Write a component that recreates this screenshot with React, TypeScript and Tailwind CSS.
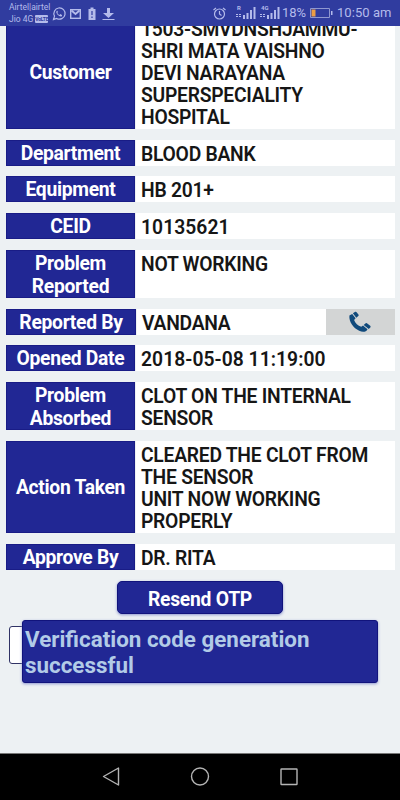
import React from "react";

type Row = { label: string; value: string[]; size: string; call?: boolean };

const rows: Row[] = [
  { label: "Customer", value: ["1503-SMVDNSHJAMMU-", "SHRI MATA VAISHNO", "DEVI NARAYANA", "SUPERSPECIALITY", "HOSPITAL"], size: "h-[114px] mb-[11px]" },
  { label: "Department", value: ["BLOOD BANK"], size: "h-[26px] mb-[10px]" },
  { label: "Equipment", value: ["HB 201+"], size: "h-[26px] mb-[11px]" },
  { label: "CEID", value: ["10135621"], size: "h-[26px] mb-[11px]" },
  { label: "Problem Reported", value: ["NOT WORKING"], size: "h-[48px] mb-[11px]" },
  { label: "Reported By", value: ["VANDANA"], size: "h-[26px] mb-[10px]", call: true },
  { label: "Opened Date", value: ["2018-05-08 11:19:00"], size: "h-[26px] mb-[11px]" },
  { label: "Problem Absorbed", value: ["CLOT ON THE INTERNAL", "SENSOR"], size: "h-[48px] mb-[11px]" },
  { label: "Action Taken", value: ["CLEARED THE CLOT FROM", "THE SENSOR", "UNIT NOW WORKING", "PROPERLY"], size: "h-[92px] mb-[11px]" },
  { label: "Approve By", value: ["DR. RITA"], size: "h-[26px] mb-[11px]" },
];

function Phone() {
  return (
    <svg className="mr-[1px] h-[22px] w-[24px]" viewBox="0 0 24 22" fill="#104a7c">
      <path d="M1.400 4.500 4.200 3 7.600 7.300 6.100 8.900c1.100 3.300 3.800 5.900 7.200 6.900l1.700-1.300 4.500 3.700c-1.300 2.800-4.700 3.400-8.300 1.600C5.500 17 .8 10.900 1.400 4.500Z" />
      <path d="m4.900 2.300 2.300-1.500q.8-.3 1.400.4l2 2.600q.3.700-.3 1.300L8.300 6.700zM15.700 13.900l2-1.700q.6-.3 1.200.1l3.300 2.500q.7.700.3 1.400l-1.700 1.700z" />
    </svg>
  );
}

function DetailRow({ row }: { row: Row }) {
  return (
    <div className={`flex shrink-0 ${row.size}`}>
      <div className={`flex shrink-0 items-center justify-center border border-[#191c86] bg-[#212794] px-4 pt-[3px] text-center tracking-[-0.3px] text-white ${row.call ? "w-[130px]" : "w-[129px]"}`}>
        <span className={row.label.includes("Problem") ? "w-[90px]" : "whitespace-nowrap"}>{row.label}</span>
      </div>
      <div className="ml-px flex-1 bg-white pt-[3.500px] pl-[5px] font-semibold whitespace-nowrap text-[#161616]">
        {row.value.map((line) => <div key={line} className={/^\d[\d:\s-]+$/.test(line) ? "tracking-[0.05px]" : "tracking-[-0.25px]"}>{line}</div>)}
      </div>
      {row.call && <div className="flex w-[69px] items-center justify-center bg-[#d3d5d5]"><Phone /></div>}
    </div>
  );
}

function Signal({ label }: { label: string }) {
  return (
    <div className="relative h-[15px] w-[20px]">
      <span className="absolute -top-[1px] left-[1px] text-[6px] leading-[8px] font-bold">{label}</span>
      <svg className="h-[15px] w-[20px]" viewBox="0 0 20 15" fill="#b4bbeb">
        <path d="M0 9h2v1H0zm3 0h2v1H3zM0 11h2v1H0zm3 0h2v1H3zM7 10h2v4H7zm3.500-2h2v6h-2zm3.500-3h2v9h-2zm3.500-3h2v12h-2z" />
      </svg>
    </div>
  );
}

function StatusBar() {
  return (
    <header className="z-10 flex h-[26px] shrink-0 bg-[#303c9f] pl-[9px] text-[#b4bbeb]">
      <div className="w-[43px] pt-[1px] text-[8.500px] leading-[12px] whitespace-nowrap">
        <div>Airtel|airtel</div>
        <div className="flex items-center gap-[2px]">Jio 4G <span className="h-[8px] w-[13px] rounded-[1px] bg-[#b4bbeb] text-center text-[5px] leading-[8px] font-bold tracking-[-0.2px] text-[#303c9f]">VoLTE</span></div>
      </div>
      <svg className="h-[27px] w-[66px]" viewBox="52 0 66 27" fill="none" stroke="#b4bbeb">
        <path d="m53.500 19.500 1-3.400a5.600 5.600 0 1 1 2.200 2.300Z" strokeWidth="1.200" />
        <path d="M57 10.800c-1.600 1 0 3.600 1.600 4.800 1.500 1.200 3 1.300 3.500.1l-.2-.8-1.500-.8-.9.900c-1.100-.5-1.700-1.200-2.200-2.100l.6-.8-.5-1.300z" fill="#b4bbeb" stroke="none" />
        <rect x="70.700" y="9.700" width="9.600" height="8.600" strokeWidth="1.400" />
        <path d="m71.500 10.500 4 3.500 4-3.500" strokeWidth="1.800" />
        <path d="M88.500 9h2V7.500h3V9h2v11h-7z" fill="#b4bbeb" stroke="none" />
        <path d="M92 11v4m0 1.500V18" stroke="#303c9f" strokeWidth="1.200" />
        <path d="M107 8h3v5h4l-5.500 5-5.500-5h4zM102.500 19h12v1h-12z" fill="#b4bbeb" stroke="none" />
      </svg>
      <div className="flex-1" />
      <svg className="mt-[7px] h-[13px] w-[13px]" viewBox="0 0 13 13" fill="none" stroke="#b4bbeb" strokeWidth="1.200">
        <circle cx="6.500" cy="7" r="5" /><path d="M6.500 4v3l2 1.500M.5 3l2.500-2M12.500 3 10 1" />
      </svg>
      <div className="mt-[5px] ml-[10px] flex gap-[4px]"><Signal label="R" /><Signal label="4G" /></div>
      <span className="ml-[2px] w-[28px] text-[13px] leading-[26px] whitespace-nowrap">18%</span>
      <svg className="mt-[8px] h-[11px] w-[23px]" viewBox="0 0 23 11">
        <path d="M.5.5h19v9H.5z" fill="none" stroke="#8f97d0" />
        <path d="M1.500 1.500h4v7h-4z" fill="#ed9d45" /><path d="M21 3h1.500v4H21z" fill="#b4bbeb" />
      </svg>
      <span className="ml-[4px] w-[63px] text-[13px] leading-[26px] tracking-[0.050px] whitespace-nowrap">10:50 am</span>
    </header>
  );
}

export default function App() {
  return (
    <div className="flex h-[800px] w-[400px] flex-col overflow-hidden bg-[#edf1f3] font-['Roboto','Liberation_Sans',sans-serif]">
      <StatusBar />
      <main className="flex min-h-0 flex-1 flex-col overflow-hidden">
        <section className="-mt-[11px] flex shrink-0 flex-col pr-[5px] pl-[6px] text-[19.300px] leading-[22.100px] font-bold">
          {rows.map((row) => <DetailRow key={row.label} row={row} />)}
        </section>
        <button className="h-[33px] w-[166px] shrink-0 self-center rounded-[5px] border border-[#11137c] bg-[#212794] pt-[2px] text-[19.300px] leading-[31px] font-bold tracking-[-0.25px] text-white shadow-[0_1px_3px_#8d96d0]">Resend OTP</button>
        <div className="relative mt-[12px] ml-[9px] h-[38px] w-[300px] shrink-0 rounded-[3px] border border-[#303365] bg-white">
          <div role="status" className="absolute -top-[7.500px] left-[12px] h-[63px] w-[356px] rounded-[3px] border border-[#11137c] bg-[#212794] pt-[5px] pl-[2px] text-[22.400px] leading-[26px] font-bold whitespace-nowrap text-[#b2cbe7] shadow-[0_1px_3px_#8d96d0]">
            Verification code generation<br />successful
          </div>
        </div>
      </main>
      <nav className="h-[47px] shrink-0 border-t border-[#777] bg-black">
        <svg className="h-[46px] w-[400px]" viewBox="0 754 400 46" fill="none" stroke="#b4b4b4" strokeWidth="1.400">
          <path d="m103.500 776.500 15-8.500v17z" strokeLinejoin="round" /><circle cx="200" cy="776.500" r="8.500" /><rect x="281" y="769" width="16" height="15.500" rx=".5" />
        </svg>
      </nav>
    </div>
  );
}
